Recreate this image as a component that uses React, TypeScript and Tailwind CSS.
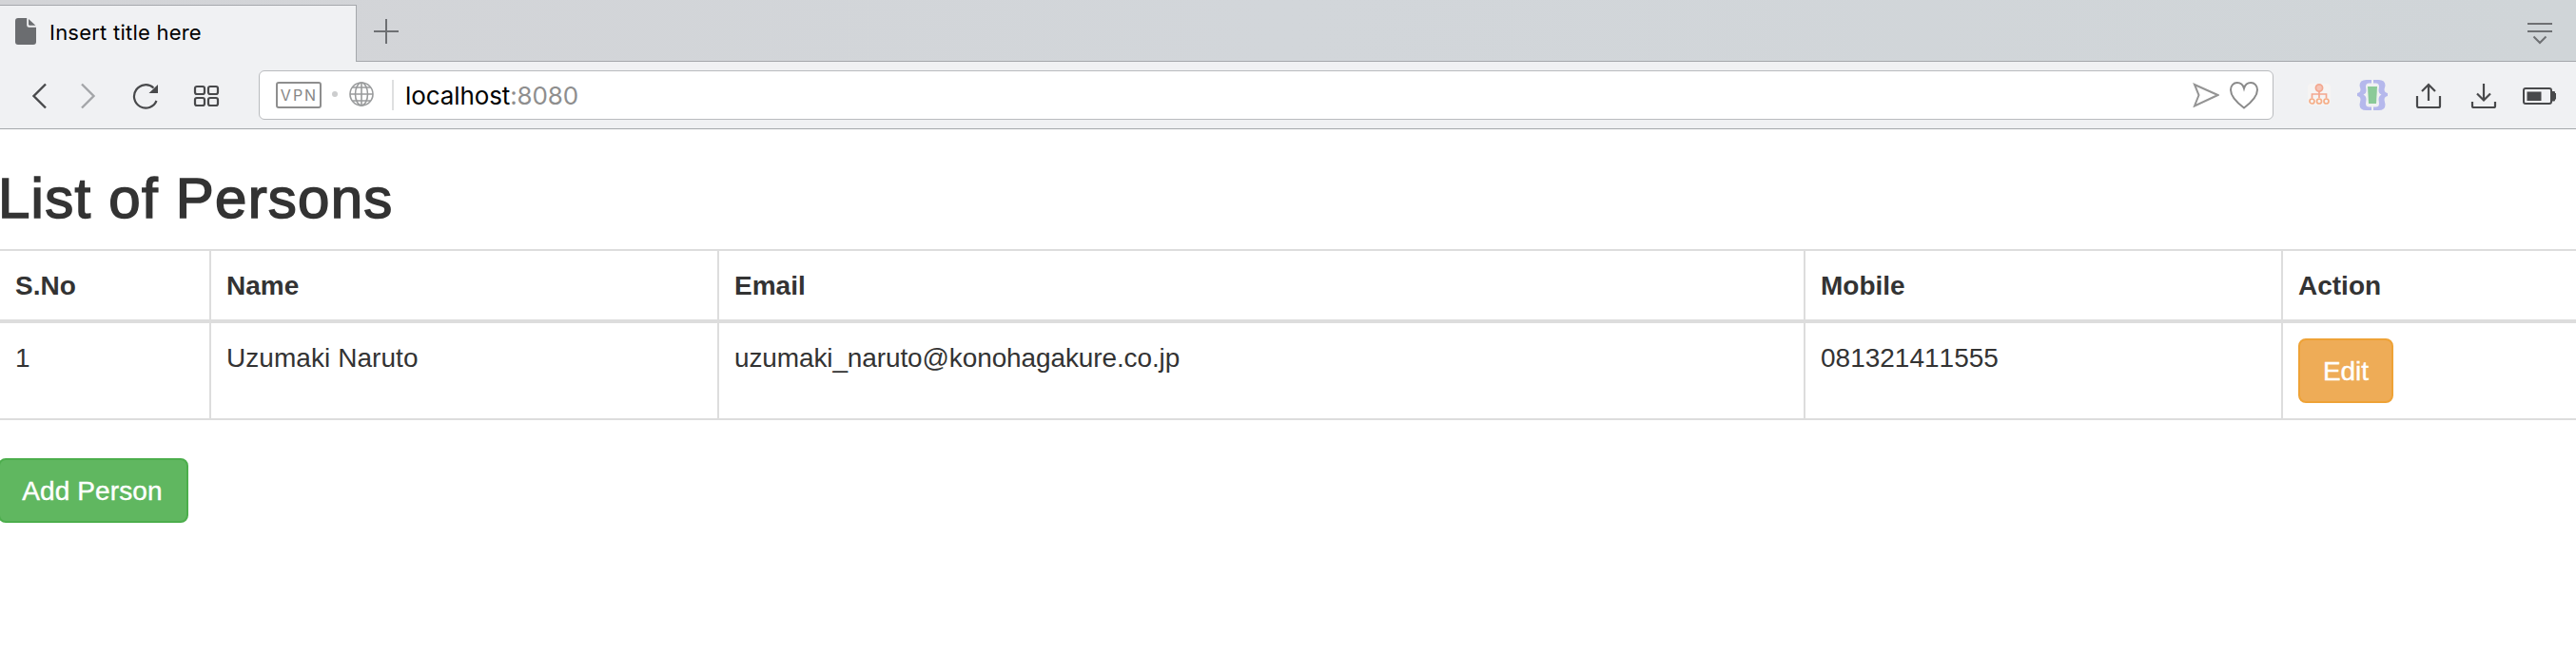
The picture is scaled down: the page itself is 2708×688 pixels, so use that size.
import React from "react";

const persons = [
  { id: 1, name: "Uzumaki Naruto", email: "uzumaki_naruto@konohagakure.co.jp", mobile: "081321411555" },
];

const columns = [
  { label: "S.No", width: "w-[222px]" },
  { label: "Name", width: "w-[534px]" },
  { label: "Email", width: "w-[1142px]" },
  { label: "Mobile", width: "w-[502px]" },
  { label: "Action", width: "w-[308px]" },
];

function TabStrip() {
  return (
    <div className="flex h-[65px] items-stretch bg-linear-to-r from-[#d3d4d7] via-[#d2d6da] to-[#d0d5d8]">
      <div className="mt-[5px] flex w-[375px] items-center border-t border-r border-[#a5a8ac] bg-[#f0f1f3] pl-4">
        <svg className="mb-1.5 h-7 w-[22px] shrink-0" viewBox="0 0 22 28" fill="#6b6d70">
          <path d="M3 0h9.200v7.500a2.300 2.300 0 0 0 2.300 2.300H22V25a3 3 0 0 1-3 3H3a3 3 0 0 1-3-3V3a3 3 0 0 1 3-3z" />
          <path d="M14 1v5.600a1.200 1.200 0 0 0 1.200 1.200h6.200z" />
        </svg>
        <span className="mb-1 ml-[14px] text-[22px] leading-7 tracking-[0.23px] whitespace-nowrap text-black">Insert title here</span>
      </div>
      <div className="flex flex-1 justify-between border-b border-[#a5a8ac] pr-[25px] pl-[18px]">
        <svg className="mt-[14px] h-[38px] w-[26px]" viewBox="0 -6 26 38" stroke="#6e7073" strokeWidth="2">
          <path d="M0 13h26M13 0v26" />
        </svg>
        <svg className="mt-[23px] h-6 w-[26px]" viewBox="0 0 26 24" fill="none" stroke="#6e7073" strokeWidth="2">
          <path d="M0 2h26M0 10h26M6.500 15.500l6.500 6.500 6.500-6.500" />
        </svg>
      </div>
    </div>
  );
}

function AddressBar() {
  return (
    <div className="flex h-[52px] w-[2118px] shrink-0 items-start rounded-md border border-[#b9bbbe] bg-white pl-[17px]">
      <div className="mt-[11px] flex h-7 w-12 items-center justify-center rounded-[3px] border-2 border-[#8e8e8e] pl-[1px] text-[16px] leading-6 tracking-[2px] text-[#868686]">
        VPN
      </div>
      <div className="mt-[21px] ml-[11px] h-1.5 w-1.5 rounded-full bg-[#cccdce]" />
      <svg className="mt-[11px] ml-3 h-[26px] w-[26px]" viewBox="0 0 26 26" fill="none" stroke="#999b9c" strokeWidth="1.600">
        <circle cx="13" cy="13" r="12" />
        <ellipse cx="13" cy="13" rx="6.500" ry="12" />
        <path d="M13 1v24M1 13h24M3.500 6h19M3.500 20h19" />
      </svg>
      <div className="mt-[9px] ml-[19px] h-8 w-0.5 bg-[#dedfe0]" />
      <div className="mt-[10px] ml-[12px] text-[26px] leading-8 tracking-[-0.1px] whitespace-nowrap text-black">
        localhost<span className="text-[#8e8e8e]">:8080</span>
      </div>
      <svg className="mt-[12px] mr-[10px] ml-auto h-[26px] w-7" viewBox="0 0 28 26" fill="none" stroke="#949494" strokeWidth="2">
        <path d="M2 2l24.500 11L2 24.500 6.500 13z" />
      </svg>
      <svg className="mt-[10px] mr-[14px] h-[30px] w-8" viewBox="0 0 32 30" fill="none" stroke="#8a8a8a" strokeWidth="2">
        <path d="M16 28.500C10 24 2 17.500 2 9.500 2 5 5 2 8.800 2 12 2 15 4.300 16 8c1-3.700 4-6 7.200-6C27 2 30 5 30 9.500 30 17.500 22 24 16 28.500z" />
      </svg>
    </div>
  );
}

function Toolbar() {
  return (
    <div className="flex h-[71px] items-start border-b border-[#a5a8ac] bg-[#f0f1f3] pt-[9px] pl-[33px]">
      <svg className="mt-[13px] h-7 w-4" viewBox="0 0 16 28" fill="none" stroke="#48494b" strokeWidth="2.400">
        <path d="M15 1.500L2.500 14 15 26.500" />
      </svg>
      <svg className="mt-[13px] ml-[36px] h-7 w-4" viewBox="0 0 16 28" fill="none" stroke="#a3a5a8" strokeWidth="2.400">
        <path d="M1 1.500L13.500 14 1 26.500" />
      </svg>
      <svg className="mt-[13px] ml-[37px] h-7 w-[30px]" viewBox="0 0 30 28" fill="none" stroke="#48494b" strokeWidth="2.200">
        <path d="M26.500 19A12.200 12.200 0 1 1 23.500 5.500" />
        <path d="M28 2v9h-9.500z" fill="#48494b" stroke="none" />
      </svg>
      <svg className="mt-[15px] ml-[34px] h-6 w-[30px]" viewBox="0 0 30 24" fill="none" stroke="#48494b" strokeWidth="2.200">
        <rect x="3" y="2" width="10" height="8" rx="2" />
        <rect x="17" y="2" width="10" height="8" rx="2" />
        <rect x="3" y="14" width="10" height="8" rx="2" />
        <rect x="17" y="14" width="10" height="8" rx="2" />
      </svg>
      <div className="ml-10 flex">
        <AddressBar />
      </div>
      <svg className="mt-[13px] ml-9 h-[26px] w-6" viewBox="0 0 24 26" fill="none" stroke="#f3a78f" strokeWidth="1.700">
        <rect x="0" y="1" width="24" height="23" rx="4" fill="#f6f4f3" stroke="none" />
        <circle cx="12" cy="5.500" r="3.600" fill="#f6c4b6" />
        <path d="M12 9v7M4.500 16.500v-4.500h15v4.500" />
        <g stroke="#f5ae88">
          <circle cx="4.500" cy="19.500" r="2.500" />
          <circle cx="12" cy="19.500" r="2.500" />
          <circle cx="19.500" cy="19.500" r="2.500" />
        </g>
      </svg>
      <svg className="mt-[10px] ml-7 h-8 w-8" viewBox="0 0 32 32">
        <g fill="#b5b8ec">
          <path d="M15 0v3.500h-2.500Q9 3.500 9 7l.5 4q0 3.500-3 4.500 3 1.500 3 5L9 25q0 3.500 3.500 3.500H15V32H9.500Q2.500 32 2.500 26l1-5q0-3.500-3.500-4v-3q3.500-.5 3.500-4l-1-4Q2.500 0 9.500 0z" />
          <path d="M17 0v3.500h2.500Q23 3.500 23 7l-.5 4q0 3.500 3 4.500-3 1.500-3 5l.5 4.500q0 3.500-3.500 3.500H17V32h5.500q7 0 7-6l-1-5q0-3.500 3.500-4v-3q-3.500-.5-3.500-4l1-4q0-6-7-6z" />
        </g>
        <path d="M11 7h10l-1 18h-8z" fill="#8bca98" />
      </svg>
      <svg className="mt-[13px] ml-[29px] h-7 w-7" viewBox="0 0 28 28" fill="none" stroke="#48494b" strokeWidth="2.200">
        <path d="M2 14v10.500q0 1.500 1.500 1.500h21q1.500 0 1.500-1.500V14M14 19V2M7 9l7-7 7 7" />
      </svg>
      <svg className="mt-[13px] ml-[30px] h-7 w-7" viewBox="0 0 28 28" fill="none" stroke="#48494b" strokeWidth="2.200">
        <path d="M2 20v4.500q0 1.500 1.500 1.500h21q1.500 0 1.500-1.500V20M14 1v17.500M7 11.500l7 7 7-7" />
      </svg>
      <svg className="mt-[17px] ml-[27px] h-5 w-9" viewBox="0 0 36 20" fill="none">
        <rect x="1" y="2" width="29" height="16" rx="2" stroke="#48494b" strokeWidth="2" />
        <path d="M4.500 5.500h15v9.500h-15zM30.500 5H33q1 0 1 1v1h1v6.500h-1v1q0 1-1 1h-2.500z" fill="#48494b" />
      </svg>
    </div>
  );
}

export default function App() {
  return (
    <div className="h-[688px] w-[2708px] overflow-hidden bg-white font-['Inter',sans-serif]">
      <TabStrip />
      <Toolbar />
      <main className="font-['Liberation_Sans',sans-serif] text-[28px] leading-10 text-[#333333] [font-kerning:none]">
        <h1 className="mt-10 mb-5 -ml-0.5 text-[60px] leading-[66px] font-normal tracking-[1.250px] [-webkit-text-stroke:1.6px_#333333]">
          List of Persons
        </h1>
        <table className="w-[2708px] table-fixed border-separate border-spacing-0 border-t-2 border-[#dddddd] text-left">
          <thead>
            <tr>
              {columns.map((column) => (
                <th key={column.label} className={`${column.width} border-r-2 border-b-4 border-[#dddddd] px-4 pt-[17px] pb-[15px] font-bold last:border-r-0`}>
                  {column.label}
                </th>
              ))}
            </tr>
          </thead>
          <tbody className="align-top">
            {persons.map((person) => (
              <tr key={person.id}>
                <td className="border-r-2 border-b-2 border-[#dddddd] px-4 pt-[17px]">{person.id}</td>
                <td className="border-r-2 border-b-2 border-[#dddddd] px-4 pt-[17px] tracking-[0.06px]">{person.name}</td>
                <td className="border-r-2 border-b-2 border-[#dddddd] px-4 pt-[17px] tracking-[-0.12px]">{person.email}</td>
                <td className="border-r-2 border-b-2 border-[#dddddd] px-4 pt-[17px]">{person.mobile}</td>
                <td className="border-b-2 border-[#dddddd] p-4">
                  <button className="block h-[68px] w-[100px] rounded-lg border-2 border-[#eea236] bg-[#eeac57] pt-0.5 text-white [-webkit-text-stroke:0.4px_white]">Edit</button>
                </td>
              </tr>
            ))}
          </tbody>
        </table>
        <button className="mt-10 -ml-0.5 block h-[68px] w-[200px] rounded-lg border-2 border-[#4cae4c] bg-[#60b760] pt-0.5 pr-0.5 tracking-[0.1px] whitespace-nowrap text-white [-webkit-text-stroke:0.4px_white]">
          Add Person
        </button>
      </main>
    </div>
  );
}
